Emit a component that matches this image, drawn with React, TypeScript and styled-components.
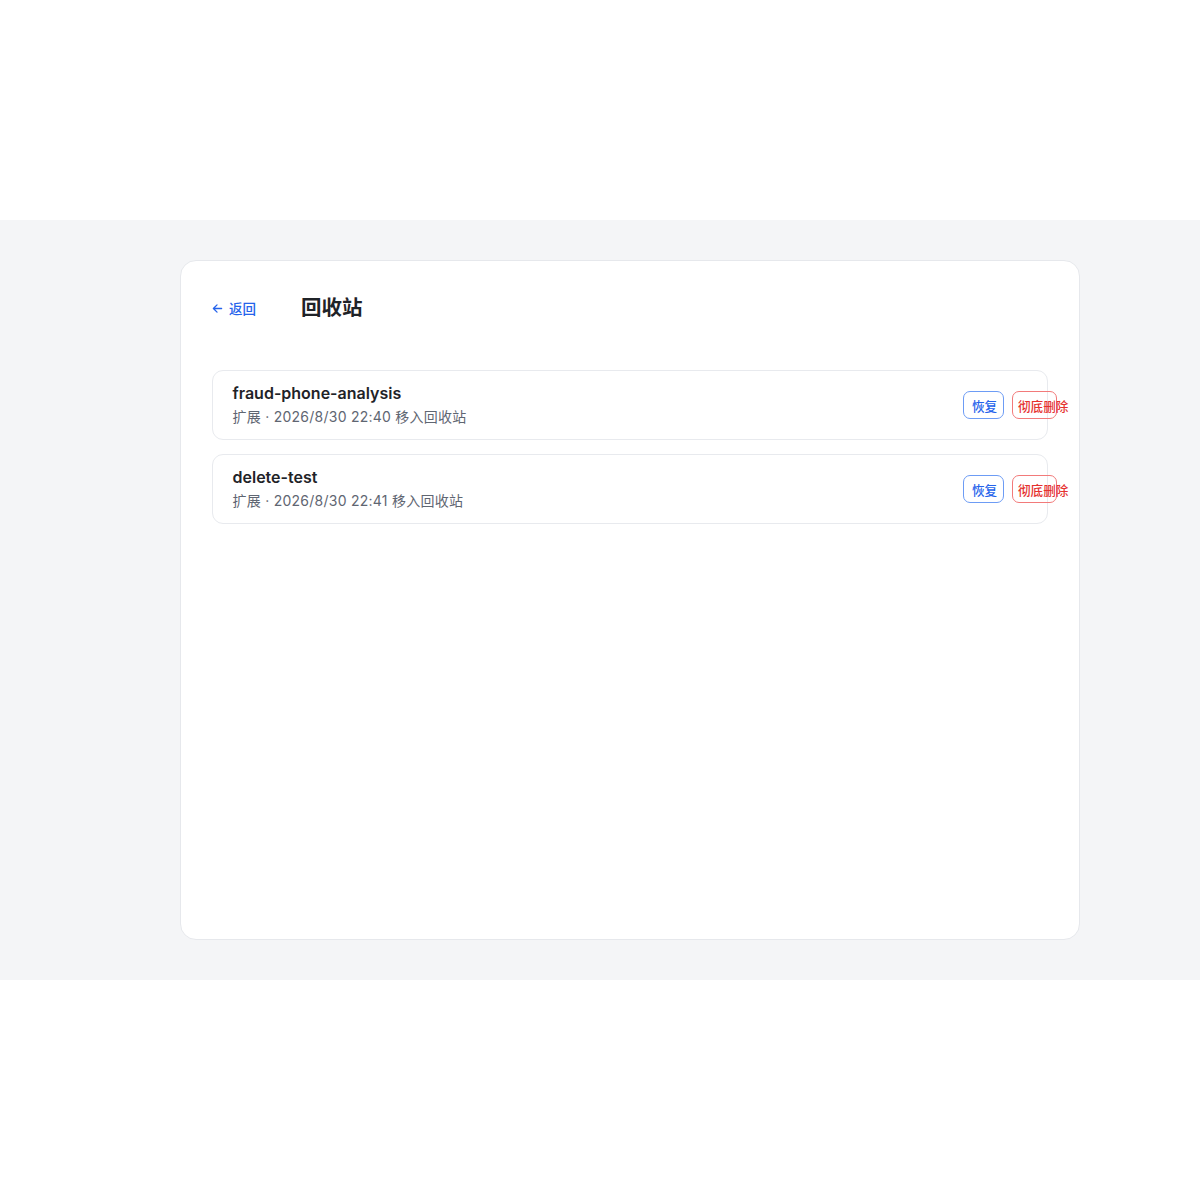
import React from "react";
import styled, { createGlobalStyle } from "styled-components";

const GlobalStyle = createGlobalStyle`
  html, body {
    margin: 0;
    padding: 0;
    background: #ffffff;
  }
  body {
    font-family: Inter, "Noto Sans CJK SC", "Noto Sans", sans-serif;
    -webkit-font-smoothing: antialiased;
  }
  #root {
    min-height: 1200px;
    display: flex;
    align-items: center;
  }
  * { box-sizing: border-box; }
`;

const Backdrop = styled.div`
  width: 100%;
  background: #f4f5f7;
  padding: 40px 120px 40px 180px;
`;

const Panel = styled.section`
  width: 900px;
  height: 680px;
  background: #ffffff;
  border: 1px solid #e6e8ec;
  border-radius: 16px;
  padding: 31px 31px;
`;

const Header = styled.header`
  display: flex;
  align-items: center;
  gap: 45px;
  height: 32px;
  margin-bottom: 46px;
`;

const BackLink = styled.button`
  display: flex;
  align-items: center;
  gap: 6px;
  padding: 0;
  border: none;
  background: none;
  color: #2563eb;
  font-family: inherit;
  font-size: 13.5px;
  font-weight: 500;
  cursor: pointer;
`;

const Title = styled.h1`
  margin: 0;
  font-size: 20.5px;
  font-weight: 700;
  color: #1f2328;
  line-height: 32px;
`;

const List = styled.ul`
  list-style: none;
  margin: 0;
  padding: 0;
  display: flex;
  flex-direction: column;
  gap: 14px;
`;

const Row = styled.li`
  display: flex;
  align-items: center;
  border: 1.5px solid #e8eaee;
  border-radius: 11px;
  padding: 12px 20px 12px 19.5px;
`;

const Info = styled.div`
  flex: 1;
  min-width: 0;
  display: flex;
  flex-direction: column;
  gap: 4px;
`;

const Name = styled.div`
  font-size: 16px;
  font-weight: 600;
  line-height: 20px;
  color: #1f2328;
`;

const Meta = styled.div`
  font-size: 14px;
  line-height: 20px;
  letter-spacing: 0.25px;
  color: #5f6672;
`;

/* Fixed-width action column; the buttons are allowed to spill past it. */
const Actions = styled.div`
  flex: 0 0 64px;
  width: 64px;
  min-width: 0;
  display: flex;
  gap: 8px;
  white-space: nowrap;
`;

const ActionButton = styled.button<{ $tone: "blue" | "red"; $w: number; $padLeft: number }>`
  flex: 0 0 ${(p) => p.$w}px;
  width: ${(p) => p.$w}px;
  height: 28px;
  padding: 0 0 0 ${(p) => p.$padLeft}px;
  text-align: left;
  overflow: visible;
  white-space: nowrap;
  border-radius: 7px;
  background: transparent;
  font-family: inherit;
  font-size: 12.6px;
  font-weight: 500;
  cursor: pointer;
  border: 1px solid ${(p) => (p.$tone === "blue" ? "#6d9cf5" : "#f27a7a")};
  color: ${(p) => (p.$tone === "blue" ? "#2563eb" : "#e5312f")};
`;

const items = [
  { name: "fraud-phone-analysis", meta: "扩展 · 2026/8/30 22:40 移入回收站" },
  { name: "delete-test", meta: "扩展 · 2026/8/30 22:41 移入回收站" },
];

export default function App() {
  return (
    <>
      <GlobalStyle />
      <Backdrop>
        <Panel>
          <Header>
            <BackLink>
              <svg width="11" height="11" viewBox="0 0 12 12" fill="none" stroke="currentColor" strokeWidth="1.4" strokeLinecap="round" strokeLinejoin="round">
                <path d="M10.5 6H1.5M5.5 2L1.5 6l4 4" />
              </svg>
              返回
            </BackLink>
            <Title>回收站</Title>
          </Header>
          <List>
            {items.map((it) => (
              <Row key={it.name}>
                <Info>
                  <Name>{it.name}</Name>
                  <Meta>{it.meta}</Meta>
                </Info>
                <Actions>
                  <ActionButton $tone="blue" $w={41} $padLeft={8}>恢复</ActionButton>
                  <ActionButton $tone="red" $w={45} $padLeft={5}>彻底删除</ActionButton>
                </Actions>
              </Row>
            ))}
          </List>
        </Panel>
      </Backdrop>
    </>
  );
}
